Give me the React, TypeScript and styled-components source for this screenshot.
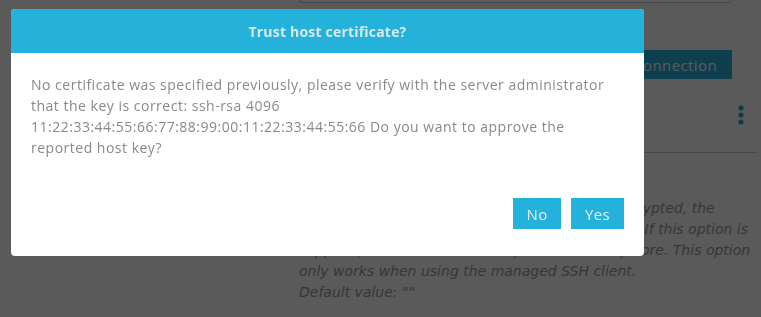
import styled, { createGlobalStyle } from 'styled-components';

const GlobalStyle = createGlobalStyle`
  html, body {
    margin: 0;
    padding: 0;
    background: #ffffff;
    overflow: hidden;
    font-family: "Open Sans", "DejaVu Sans", sans-serif;
  }
  * {
    box-sizing: border-box;
  }
`;

const Page = styled.div`
  width: 761px;
  height: 317px;
  display: grid;
  grid-template-columns: 299px minmax(0, 1fr);
`;

const Sidebar = styled.aside`
  background: #ffffff;
`;

const Content = styled.main`
  display: flex;
  flex-direction: column;
  padding-right: 4px;
  overflow: hidden;
`;

const FieldBox = styled.div`
  height: 30px;
  margin-top: -27px;
  margin-right: 25px;
  border: 1px solid #c8c8c8;
  border-radius: 3px;
`;

const ActionRow = styled.div`
  display: flex;
  justify-content: flex-end;
  margin-top: 47px;
  margin-right: 25px;
`;

const ConnectionButton = styled.button`
  height: 29px;
  padding: 0 15px;
  border: none;
  background: #25b2e0;
  color: #ffffff;
  font-family: "Open Sans", sans-serif;
  font-size: 15px;
  letter-spacing: 0.4px;
`;

const MenuRow = styled.div`
  display: flex;
  justify-content: flex-end;
  margin-top: 26px;
  margin-right: 13px;
  height: 20px;
`;

const Kebab = styled.svg`
  width: 6px;
  height: 20px;
  fill: #25a9d4;
`;

const Divider = styled.hr`
  margin: 27px 0 0;
  border: none;
  border-top: 1px solid #c4c4c4;
`;

const Help = styled.p`
  margin: 45px 0 0;
  font-family: "DejaVu Sans", sans-serif;
  font-style: italic;
  font-size: 14px;
  line-height: 21px;
  color: #9a9a9a;
  white-space: pre;
`;

const Backdrop = styled.div`
  position: fixed;
  inset: 0;
  background: rgba(0, 0, 0, 0.647);
`;

const Dialog = styled.div`
  position: absolute;
  left: 11px;
  top: 9px;
  width: 633px;
  height: 247px;
  background: #ffffff;
  border-radius: 4px;
  overflow: hidden;
  display: flex;
  flex-direction: column;
`;

const DialogHeader = styled.header`
  height: 44px;
  background: #24b1da;
  color: #d9e8ee;
  display: flex;
  align-items: center;
  justify-content: center;
  font-size: 14px;
  font-weight: 700;
  letter-spacing: 0.2px;
`;

const DialogBody = styled.div`
  flex: 1;
  padding: 21px 20px 27px;
  display: flex;
  flex-direction: column;
`;

const Message = styled.p`
  margin: 0;
  max-width: 582px;
  font-size: 14px;
  line-height: 21px;
  letter-spacing: 0.5px;
  color: #8c8886;
`;

const Buttons = styled.div`
  margin-top: auto;
  display: flex;
  justify-content: flex-end;
  gap: 10px;
`;

const DialogButton = styled.button<{ $width: number }>`
  width: ${p => p.$width}px;
  height: 31px;
  padding: 0;
  border: none;
  background: #24b1da;
  color: #e4f2f7;
  font-family: "Open Sans", sans-serif;
  font-size: 15px;
  letter-spacing: 0.4px;
  cursor: pointer;
`;

export default function App() {
  return (
    <>
      <GlobalStyle />
      <Page>
        <Sidebar />
        <Content>
          <FieldBox />
          <ActionRow>
            <ConnectionButton>Test connection</ConnectionButton>
          </ActionRow>
          <MenuRow>
            <Kebab viewBox="0 0 6 20">
              <circle cx="3" cy="3" r="2.6" />
              <circle cx="3" cy="10" r="2.6" />
              <circle cx="3" cy="17" r="2.6" />
            </Kebab>
          </MenuRow>
          <Divider />
          <Help>
            {"Your private key's passphrase. If your key is encrypted, the\n" +
              'passphrase must be given here, else kept blank. If this option is\n' +
              'supplied, it must match the key in the SSH keystore. This option\n' +
              'only works when using the managed SSH client.\n' +
              'Default value: ""'}
          </Help>
        </Content>
      </Page>
      <Backdrop>
        <Dialog>
          <DialogHeader>Trust host certificate?</DialogHeader>
          <DialogBody>
            <Message>
              No certificate was specified previously, please verify with the server administrator
              that the key is correct: ssh-rsa 4096 11:22:33:44:55:66:77:88:99:00:11:22:33:44:55:66
              Do you want to approve the reported host key?
            </Message>
            <Buttons>
              <DialogButton $width={48}>No</DialogButton>
              <DialogButton $width={53}>Yes</DialogButton>
            </Buttons>
          </DialogBody>
        </Dialog>
      </Backdrop>
    </>
  );
}
